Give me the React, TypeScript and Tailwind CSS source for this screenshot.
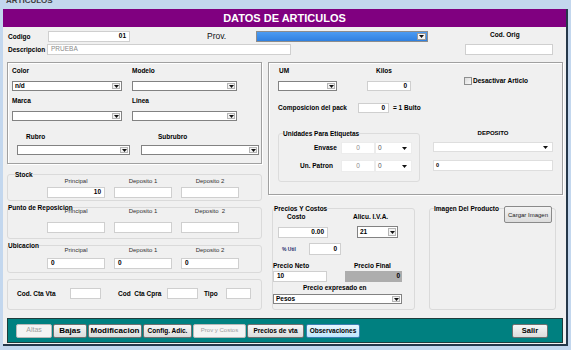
import React from "react";

const lbl = "text-[6.5px] leading-[8px] font-bold whitespace-nowrap";
const col = "text-[6px] leading-[7px] text-[#303030] whitespace-nowrap text-center";

type FieldProps = {
  className?: string;
  value?: string;
  align?: "left" | "right" | "center";
  muted?: boolean;
};

function Field({ className = "", value = "", align = "left", muted }: FieldProps) {
  const justify =
    align === "right" ? "justify-end" : align === "center" ? "justify-center" : "justify-start";
  return (
    <div
      className={`bg-white border border-[#cfcfcf] flex items-center px-[3px] ${justify} ${className}`}
    >
      <span className={`text-[6.5px] leading-none ${muted ? "text-[#8a8a8a]" : "font-bold"}`}>
        {value}
      </span>
    </div>
  );
}

function Arrow() {
  return (
    <svg width="5" height="3" viewBox="0 0 5 3">
      <path d="M0 0H5L2.5 3Z" fill="#111" />
    </svg>
  );
}

function Combo({ className = "", value = "" }: { className?: string; value?: string }) {
  return (
    <div className={`bg-white border border-[#828282] flex items-stretch ${className}`}>
      <span className="flex-1 text-[6.5px] font-bold leading-none flex items-center pl-[2px]">
        {value}
      </span>
      <span className="w-[8px] my-[1px] mr-[1px] border border-[#b5b5b5] bg-[#f2f2f2] flex items-center justify-center">
        <Arrow />
      </span>
    </div>
  );
}

function FlatCombo({ className = "", value = "" }: { className?: string; value?: string }) {
  return (
    <div className={`bg-white border border-[#dedede] flex items-center px-[2px] ${className}`}>
      <span className="flex-1 text-[6.5px] leading-none text-[#555]">{value}</span>
      <span className="mr-[2px]">
        <Arrow />
      </span>
    </div>
  );
}

function Btn({
  children,
  className = "",
  disabled,
  active,
}: {
  children: React.ReactNode;
  className?: string;
  disabled?: boolean;
  active?: boolean;
}) {
  return (
    <div
      className={`h-[14px] rounded-[2px] border flex items-center justify-center whitespace-nowrap ${
        active
          ? "border-[#3c7fb1] bg-linear-to-b from-[#eaf6fd] to-[#bee6fd]"
          : disabled
          ? "border-[#b8b8b8] bg-[#f4f4f4] text-[#a0a0a0]"
          : "border-[#707070] bg-linear-to-b from-[#f6f6f6] to-[#dcdcdc]"
      } ${className}`}
    >
      {children}
    </div>
  );
}

export default function App() {
  return (
    <div className="relative w-[571px] h-[350px] overflow-hidden bg-[#c3d7ee] font-['Liberation_Sans',Arial,sans-serif] text-black">
      {/* window caption */}
      <div className="h-[9px] overflow-hidden pl-[6px]">
        <div className="-mt-[4px] text-[8px] leading-[9px] font-bold text-[#404040]">ARTICULOS</div>
      </div>

      <div className="ml-[3px] w-[565px] h-[337px] bg-[#f0f0f0] border-r-2 border-b-2 border-[#25384a] flex flex-col">
        <div className="h-[18px] bg-[#800080] flex items-center justify-center text-white font-bold text-[11px] leading-none">
          DATOS DE ARTICULOS
        </div>

        {/* Codigo / Prov / Cod Orig */}
        <div className="flex items-center mt-[4px] h-[11px]">
          <span className={`${lbl} ml-[5px] w-[40px]`}>Codigo</span>
          <Field className="w-[82px] h-[11px]" value="01" align="right" />
          <span className="ml-[77px] w-[49px] text-[8.5px] leading-none text-[#111]">Prov.</span>
          <div className="w-[172px] h-[11px] border border-[#8c8c8c] bg-linear-to-b from-[#4b9bf2] to-[#2f80e0] flex justify-end items-stretch">
            <span className="w-[9px] my-[1px] mr-[1px] border border-[#9a9a9a] bg-[#f4f4f4] flex items-center justify-center">
              <Arrow />
            </span>
          </div>
          <span className={`${lbl} ml-[62px] self-start`}>Cod. Orig</span>
        </div>

        {/* Descripcion */}
        <div className="flex items-center mt-[2px] h-[11px]">
          <span className={`${lbl} ml-[5px] w-[39px]`}>Descripcion</span>
          <Field className="w-[244px] h-[11px]" value="PRUEBA" muted />
          <Field className="ml-[174px] w-[88px] h-[11px]" />
        </div>

        <div className="flex items-start mt-[7px]">
          {/* left column */}
          <div className="ml-[4px] w-[255px] flex flex-col">
            <div className="h-[102px] border border-[#a0a0a0] shadow-[inset_1px_1px_0_#fff,1px_1px_0_#fff] flex flex-col">
              <div className="flex mt-[4px]">
                <span className={`${lbl} ml-[4px] w-[120px]`}>Color</span>
                <span className={lbl}>Modelo</span>
              </div>
              <div className="flex mt-[6px]">
                <Combo className="ml-[4px] w-[110px] h-[10px]" value="n/d" />
                <Combo className="ml-[10px] w-[105px] h-[10px]" />
              </div>
              <div className="flex mt-[6px]">
                <span className={`${lbl} ml-[4px] w-[120px]`}>Marca</span>
                <span className={lbl}>Linea</span>
              </div>
              <div className="flex mt-[6px]">
                <Combo className="ml-[4px] w-[110px] h-[10px]" />
                <Combo className="ml-[10px] w-[105px] h-[10px]" />
              </div>
              <div className="flex mt-[12px]">
                <span className={`${lbl} ml-[18px] w-[132px]`}>Rubro</span>
                <span className={lbl}>Subrubro</span>
              </div>
              <div className="flex mt-[4px]">
                <Combo className="ml-[9px] w-[113px] h-[10px]" />
                <Combo className="ml-[11px] w-[118px] h-[10px]" />
              </div>
            </div>

            {/* Stock */}
            <div className="mt-[10px] border border-[#dadada] rounded-[3px] pb-[2px]">
              <div className={`${lbl} -mt-[4px] ml-[7px] w-fit bg-[#f0f0f0]`}>Stock</div>
              <div className="flex gap-[9px] ml-[39px] -mt-[1px]">
                <span className={`${col} w-[58px]`}>Principal</span>
                <span className={`${col} w-[58px]`}>Deposito 1</span>
                <span className={`${col} w-[58px]`}>Deposito 2</span>
              </div>
              <div className="flex gap-[9px] ml-[39px] mt-[2px]">
                <Field className="w-[58px] h-[11px]" value="10" align="right" />
                <Field className="w-[58px] h-[11px]" />
                <Field className="w-[58px] h-[11px]" />
              </div>
            </div>

            {/* Punto de Reposicion */}
            <div className="mt-[6px] border border-[#dadada] rounded-[3px] pb-[5px]">
              <div className={`${lbl} -mt-[4px] w-fit bg-[#f0f0f0]`}>Punto de Reposicion</div>
              <div className="relative flex gap-[9px] ml-[39px] -mt-[4px]">
                <span className={`${col} w-[58px]`}>Principal</span>
                <span className={`${col} w-[58px]`}>Deposito 1</span>
                <span className={`${col} w-[58px]`}>Deposito&nbsp; 2</span>
              </div>
              <div className="flex gap-[9px] ml-[39px] mt-[7px]">
                <Field className="w-[58px] h-[11px]" />
                <Field className="w-[58px] h-[11px]" />
                <Field className="w-[58px] h-[11px]" />
              </div>
            </div>

            {/* Ubicacion */}
            <div className="mt-[6px] border border-[#dadada] rounded-[3px] pb-[3px]">
              <div className={`${lbl} -mt-[4px] w-fit bg-[#f0f0f0]`}>Ubicacion</div>
              <div className="flex gap-[9px] ml-[39px] -mt-[3px]">
                <span className={`${col} w-[58px]`}>Principal</span>
                <span className={`${col} w-[58px]`}>Deposito 1</span>
                <span className={`${col} w-[58px]`}>Deposito 2</span>
              </div>
              <div className="flex gap-[9px] ml-[39px] mt-[4px]">
                <Field className="w-[58px] h-[11px]" value="0" />
                <Field className="w-[58px] h-[11px]" value="0" />
                <Field className="w-[58px] h-[11px]" value="0" />
              </div>
            </div>

            {/* Cuentas */}
            <div className="mt-[6px] border border-[#dadada] rounded-[3px] pt-[8px] pb-[10px]">
              <div className="flex items-center h-[11px]">
                <span className={`${lbl} ml-[9px] w-[53px]`}>Cod. Cta Vta</span>
                <Field className="w-[31px] h-[11px]" />
                <span className={`${lbl} ml-[17px] w-[49px]`}>Cod&nbsp; Cta Cpra</span>
                <Field className="w-[31px] h-[11px]" />
                <span className={`${lbl} ml-[6px] w-[22px]`}>Tipo</span>
                <Field className="w-[25px] h-[11px]" />
              </div>
            </div>
          </div>

          {/* right column */}
          <div className="ml-[6px] w-[295px] flex flex-col">
            <div className="h-[133px] border border-[#a0a0a0] shadow-[inset_1px_1px_0_#fff,1px_1px_0_#fff] flex flex-col">
              <div className="flex items-start mt-[4px]">
                <div className="ml-[9px] flex flex-col">
                  <span className={`${lbl} ml-[1px]`}>UM</span>
                  <Combo className="mt-[6px] w-[59px] h-[10px]" />
                </div>
                <div className="ml-[30px] flex flex-col">
                  <span className={`${lbl} ml-[9px]`}>Kilos</span>
                  <Field className="mt-[6px] w-[44px] h-[10px]" value="0" align="right" />
                </div>
                <div className="ml-[53px] mt-[10px] flex items-center">
                  <span className="w-[8px] h-[8px] border border-[#8e8f8f] bg-linear-to-br from-[#dcdcdc] to-[#f8f8f8]" />
                  <span className={`${lbl} ml-[1px]`}>Desactivar Articlo</span>
                </div>
              </div>

              <div className="flex items-center mt-[12px] h-[10px]">
                <span className={`${lbl} ml-[9px] w-[80px]`}>Composicion del pack</span>
                <Field className="w-[31px] h-[10px]" value="0" align="right" />
                <span className={`${lbl} ml-[4px]`}>= 1 Bulto</span>
              </div>

              <div className="flex items-start mt-[20px]">
                <div className="ml-[9px] w-[142px] border border-[#dcdcdc] rounded-[3px] pb-[9px]">
                  <div className={`${lbl} -mt-[4px] ml-[4px] w-fit bg-[#f0f0f0]`}>
                    Unidades Para Etiquetas
                  </div>
                  <div className="flex items-center mt-[4px] h-[12px]">
                    <span className={`${lbl} w-[62px] pl-[35px]`}>Envase</span>
                    <Field className="w-[34px] h-[12px] border-[#ececec]" value="0" align="center" muted />
                    <FlatCombo className="w-[37px] h-[12px] border-[#ececec]" value="0" />
                  </div>
                  <div className="flex items-center mt-[6px] h-[12px]">
                    <span className={`${lbl} w-[62px] pl-[21px]`}>Un. Patron</span>
                    <Field className="w-[34px] h-[12px] border-[#ececec]" value="0" align="center" muted />
                    <FlatCombo className="w-[37px] h-[12px] border-[#ececec]" value="0" />
                  </div>
                </div>
                <div className="ml-[13px] w-[120px] flex flex-col">
                  <span className={`${lbl} -mt-[4px] text-center text-[6px]`}>DEPOSITO</span>
                  <FlatCombo className="mt-[5px] h-[10px]" />
                  <div className="mt-[8px] h-[11px] bg-white border border-[#dedede] flex items-center pl-[2px]">
                    <span className="text-[5.5px] font-bold leading-none">0</span>
                  </div>
                </div>
              </div>
            </div>

            <div className="flex items-stretch mt-[13px] h-[102px]">
              {/* Precios Y Costos */}
              <div className="ml-[4px] w-[143px] border border-[#dadada] rounded-[3px] flex flex-col">
                <div className={`${lbl} -mt-[4px] ml-[1px] w-fit bg-[#f0f0f0]`}>Precios Y Costos</div>
                <div className="flex">
                  <span className={`${lbl} ml-[14px] w-[66px]`}>Costo</span>
                  <span className={lbl}>Alicu. I.V.A.</span>
                </div>
                <div className="flex items-center mt-[5px] h-[12px]">
                  <Field className="ml-[5px] w-[50px] h-[11px]" value="0.00" align="right" />
                  <Combo className="ml-[29px] w-[41px] h-[12px] border-[#6a6a6a]" value="21" />
                </div>
                <div className="flex items-center mt-[5px] h-[12px]">
                  <span className="ml-[9px] w-[27px] text-[5px] font-bold text-[#1c2f6e] leading-none">
                    % Util
                  </span>
                  <Field className="w-[32px] h-[12px]" value="0" align="right" />
                </div>
                <div className="flex mt-[7px]">
                  <span className={`${lbl} w-[81px]`}>Precio Neto</span>
                  <span className={lbl}>Precio Final</span>
                </div>
                <div className="flex items-center mt-[1px] h-[11px]">
                  <Field className="w-[54px] h-[11px]" value="10" />
                  <div className="ml-[18px] w-[57px] h-[11px] bg-[#adadad] flex items-center justify-end pr-[2px]">
                    <span className="text-[6.5px] font-bold leading-none">0</span>
                  </div>
                </div>
                <span className={`${lbl} mt-[2px] ml-[30px]`}>Precio expresado en</span>
                <Combo className="mt-[2px] w-[129px] h-[10px]" value="Pesos" />
              </div>

              {/* Imagen */}
              <div className="ml-[14px] w-[127px] border border-[#dadada] rounded-[3px] flex flex-col">
                <div className="flex items-start -mt-[4px]">
                  <span className={`${lbl} ml-[4px] bg-[#f0f0f0]`}>Imagen Del Producto</span>
                  <div className="ml-auto mr-[3px] mt-[1px] w-[48px] h-[17px] rounded-[2px] border border-[#8a8a8a] bg-linear-to-b from-[#f4f4f4] to-[#dcdcdc] flex items-center justify-center">
                    <span className="text-[6px] leading-none text-[#222]">Cargar Imagen</span>
                  </div>
                </div>
              </div>
            </div>
          </div>
        </div>

        {/* toolbar */}
        <div className="mt-[8px] ml-[4px] w-[556px] h-[25px] bg-[#008080] border border-[#1f3c3c] flex items-center pl-[8px]">
          <Btn className="w-[36px] text-[7px]" disabled>
            Altas
          </Btn>
          <Btn className="ml-[1px] w-[34px] text-[8px] font-bold">Bajas</Btn>
          <Btn className="ml-[1px] w-[54px] text-[8px] font-bold">Modificacion</Btn>
          <Btn className="ml-[1px] w-[49px] text-[6.5px] font-bold">Config. Adic.</Btn>
          <Btn className="ml-[1px] w-[53px] text-[6px]" disabled>
            Prov y Costos
          </Btn>
          <Btn className="ml-[1px] w-[57px] text-[6.5px] font-bold">Precios de vta</Btn>
          <Btn className="ml-[2px] w-[54px] text-[6.5px] font-bold" active>
            Observaciones
          </Btn>
          <Btn className="ml-auto mr-[14px] w-[36px] text-[7.5px] font-bold">Salir</Btn>
        </div>
      </div>
    </div>
  );
}
